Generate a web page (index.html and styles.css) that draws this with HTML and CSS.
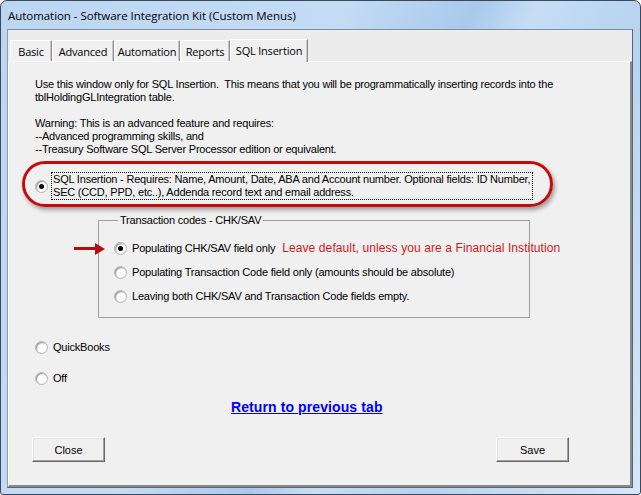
FILE: index.html
```html
<!DOCTYPE html>
<html>
<head>
<meta charset="utf-8">
<link rel="stylesheet" href="styles.css">
</head>
<body>
<div class="window">
  <div class="titlebar">Automation - Software Integration Kit (Custom Menus)</div>
  <div class="client">
    <div class="tabs">
      <div class="tab t-basic">Basic</div>
      <div class="tab t-advanced">Advanced</div>
      <div class="tab t-automation">Automation</div>
      <div class="tab t-reports">Reports</div>
      <div class="tab t-sql active">SQL Insertion</div>
    </div>
    <div class="panel">
      <p class="para">Use this window only for SQL Insertion.&nbsp; This means that you will be programmatically inserting records into the<br>tblHoldingGLIntegration table.</p>
      <p class="para warn">Warning: This is an advanced feature and requires:<br>--Advanced programming skills, and<br>--Treasury Software SQL Server Processor edition or equivalent.</p>
      <div class="option sql">
        <span class="ellipse"></span>
        <span class="radio checked"></span>
        <span class="focus">SQL Insertion - Requires: Name, Amount, Date, ABA and Account number. Optional fields: ID Number,<br>SEC (CCD, PPD, etc..), Addenda record text and email address.</span>
      </div>
      <fieldset class="group">
        <legend>Transaction codes - CHK/SAV</legend>
        <div class="option g1">
          <span class="arrow"><span class="shaft"></span><span class="head"></span></span>
          <span class="radio checked"></span>
          <span class="lbl">Populating CHK/SAV field only</span>
          <span class="note">Leave default, unless you are a Financial Institution</span>
        </div>
        <div class="option g2">
          <span class="radio"></span>
          <span class="lbl">Populating Transaction Code field only (amounts should be absolute)</span>
        </div>
        <div class="option g2">
          <span class="radio"></span>
          <span class="lbl">Leaving both CHK/SAV and Transaction Code fields empty.</span>
        </div>
      </fieldset>
      <div class="option qb">
        <span class="radio"></span>
        <span class="lbl">QuickBooks</span>
      </div>
      <div class="option off">
        <span class="radio"></span>
        <span class="lbl">Off</span>
      </div>
      <div class="linkrow"><a class="link" href="#">Return to previous tab</a></div>
      <div class="buttons">
        <div class="btn">Close</div>
        <div class="btn">Save</div>
      </div>
    </div>
  </div>
</div>
</body>
</html>
```
FILE: styles.css
```css
html, body {
  margin: 0;
  padding: 0;
  width: 641px;
  height: 495px;
  overflow: hidden;
  background: #ffffff;
}

.window {
  box-sizing: border-box;
  width: 641px;
  height: 495px;
  display: flex;
  flex-direction: column;
  border: 1px solid #3a4a5c;
  border-radius: 7px 7px 3px 3px;
  background: linear-gradient(115deg, #bcd6f2 0%, #c4dbf4 40%, #a9c9ec 55%, #c6ddf5 62%, #b7d3f0 75%, #d6e7f9 100%);
}

.titlebar {
  height: 28px;
  padding-left: 7px;
  display: flex;
  align-items: center;
  font-family: "Open Sans", "Noto Sans", sans-serif;
  font-size: 11.5px;
  color: #000;
  letter-spacing: -0.05px;
}

.client {
  flex: 1;
  margin: 0 7px 6px 6px;
  background: #ececec;
  border-top: 1px solid #7e8c9c;
  border-left: 1px solid #8d9bab;
  border-right: 1px solid #5a6470;
  border-bottom: 1px solid #5a6470;
  display: flex;
  flex-direction: column;
}

.tabs {
  display: flex;
  align-items: flex-end;
  height: 31px;
  padding-left: 2px;
  font-family: "Open Sans", "Noto Sans", sans-serif;
  font-size: 11px;
}

.tab {
  box-sizing: border-box;
  height: 21px;
  display: flex;
  align-items: center;
  justify-content: center;
  background: #f0f0f0;
  border-top: 1px solid #ffffff;
  border-left: 1px solid #ffffff;
  border-right: 1px solid #8c8c8c;
  box-shadow: inset -1px 0 0 #c8c8c8;
  color: #000;
  letter-spacing: -0.2px;
}

.t-basic { width: 42px; }
.t-advanced { width: 62px; }
.t-automation { width: 66px; }
.t-reports { width: 50px; }
.t-sql { width: 78px; }

.tab.active {
  height: 23px;
  padding-bottom: 2px;
  margin-bottom: -1px;
  background: #f0f0f0;
  position: relative;
  z-index: 1;
}

.panel {
  flex: 1;
  background: #f0f0f0;
  border-top: 1px solid #ffffff;
  border-left: 1px solid #ffffff;
  border-right: 2px solid #8a8a8a;
  border-bottom: 2px solid #8a8a8a;
  padding-left: 26px;
  font-family: "Liberation Sans", Arial, sans-serif;
  font-size: 11px;
  letter-spacing: -0.2px;
  color: #000;
  display: flex;
  flex-direction: column;
  align-items: flex-start;
}

.para {
  margin: 16px 0 0 0;
  line-height: 13px;
}

.para.warn {
  margin-top: 13px;
}

.option {
  position: relative;
  display: flex;
  align-items: center;
  line-height: 13px;
}

.radio {
  box-sizing: border-box;
  width: 13px;
  height: 13px;
  border-radius: 50%;
  border: 1px solid #b4b4b4;
  background: radial-gradient(circle at 60% 60%, #ffffff 0%, #ffffff 45%, #e2e2e2 100%);
  box-shadow: inset 1px 1px 1px #9a9a9a;
  flex: none;
  margin-right: 5px;
  display: flex;
  align-items: center;
  justify-content: center;
}

.radio.checked::after {
  content: "";
  width: 5px;
  height: 5px;
  border-radius: 50%;
  background: #000;
}

.option.sql {
  margin-top: 16px;
}

.option.sql .radio {
  margin-right: 3px;
}

.focus {
  border: 1px dotted #000;
  padding: 0 2px 0 1px;
  position: relative;
  z-index: 1;
}

.ellipse {
  position: absolute;
  left: -13px;
  top: -11px;
  width: 531px;
  height: 46px;
  box-sizing: border-box;
  border: 3px solid #c40a0a;
  border-radius: 24px;
  box-shadow: 2px 3px 4px rgba(0, 0, 0, 0.35);
}

.group {
  margin: 14px 0 0 63px;
  width: 432px;
  height: 104px;
  box-sizing: border-box;
  border: 1px solid #a0a0a0;
  padding: 15px 0 0 15px;
  min-width: 0;
}

.group legend {
  padding: 0 2px;
  margin-left: 4px;
  line-height: 13px;
}

.option.g2 {
  margin-top: 11px;
}

.note {
  margin-left: 7px;
  color: #d01818;
  font-family: "Liberation Sans", Arial, sans-serif;
  font-size: 12px;
  letter-spacing: 0.1px;
  white-space: nowrap;
}

.lbl {
  white-space: nowrap;
}

.arrow {
  position: absolute;
  left: -40px;
  top: 1px;
  width: 31px;
  height: 11px;
  display: flex;
  align-items: center;
}

.arrow .shaft {
  width: 21px;
  height: 3px;
  background: #b30e0e;
}

.arrow .head {
  width: 0;
  height: 0;
  border-top: 6px solid transparent;
  border-bottom: 6px solid transparent;
  border-left: 10px solid #b30e0e;
}

.option.qb {
  margin-top: 23px;
}

.option.off {
  margin-top: 18px;
}

.linkrow {
  align-self: stretch;
  margin-top: 14px;
  padding-left: 196px;
  line-height: 16px;
}

.link {
  font-family: "Liberation Sans", Arial, sans-serif;
  font-weight: bold;
  font-size: 14px;
  letter-spacing: 0.1px;
  color: #0000ff;
  text-decoration: underline;
}

.buttons {
  align-self: stretch;
  display: flex;
  justify-content: space-between;
  margin-top: 21px;
  padding-right: 61px;
  margin-left: -3px;
}

.btn {
  box-sizing: border-box;
  width: 73px;
  height: 25px;
  display: flex;
  align-items: center;
  justify-content: center;
  background: #f0f0f0;
  border-top: 1px solid #ffffff;
  border-left: 1px solid #ffffff;
  border-right: 1px solid #696969;
  border-bottom: 1px solid #696969;
  box-shadow: inset -1px -1px 0 #a0a0a0, inset 1px 1px 0 #e3e3e3;
  font-size: 11px;
  letter-spacing: 0;
}
```
